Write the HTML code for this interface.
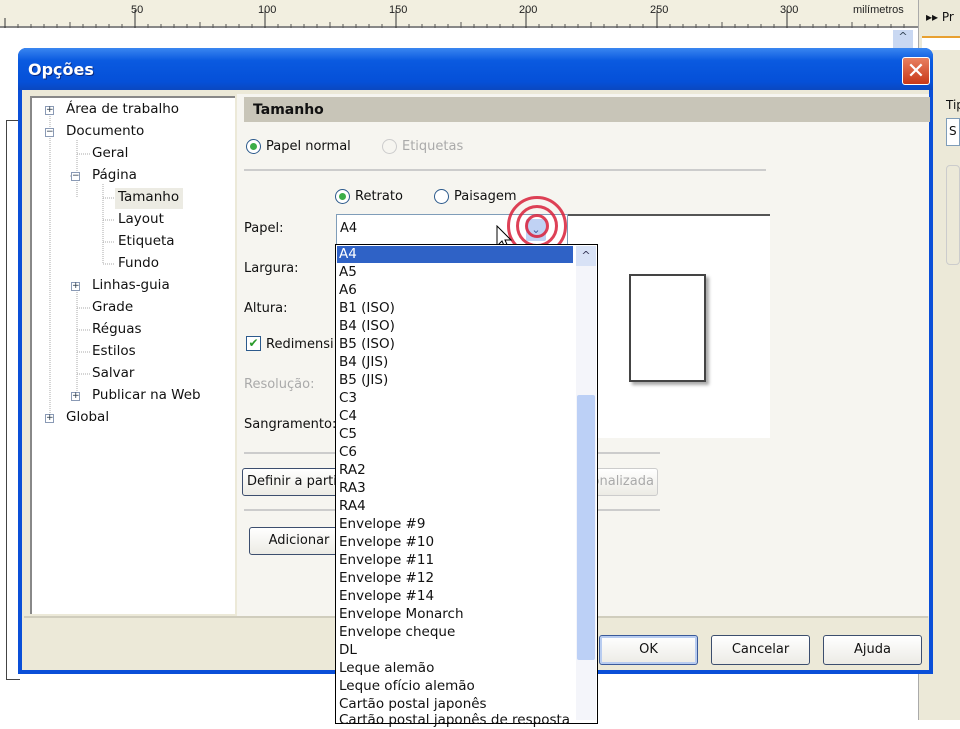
<!DOCTYPE html>
<html><head><meta charset="utf-8"><style>
*{margin:0;padding:0;box-sizing:border-box}
body{width:960px;height:720px;overflow:hidden;background:#fff;font-family:"DejaVu Sans","Liberation Sans",sans-serif;font-size:13px;color:#111;position:relative}
.a{position:absolute;white-space:nowrap}
.btn{position:absolute;border:1px solid #3c4e6e;border-radius:3px;background:linear-gradient(#fff,#ecebe5);text-align:center;font-size:13px}
.tr{position:absolute;font-size:13.5px}
.pm{position:absolute;width:9px;height:9px;border:1px solid #8a9ab5;background:#fff;font-size:9px;line-height:7px;text-align:center;color:#234}
.li{position:absolute;left:339px;font-size:13.5px;height:18px;line-height:18px}
</style></head><body>
<!-- ruler -->
<div class="a" style="left:0;top:0;width:918px;height:28px;background:#f2efe0;border-bottom:2px solid #888"></div>
<svg class="a" style="left:0;top:0" width="918" height="30">
<g stroke="#333" stroke-width="1">
<line x1="5" y1="18" x2="5" y2="28"/><line x1="135" y1="10" x2="135" y2="28"/><line x1="265" y1="10" x2="265" y2="28"/><line x1="396" y1="10" x2="396" y2="28"/><line x1="526" y1="10" x2="526" y2="28"/><line x1="657" y1="10" x2="657" y2="28"/><line x1="787" y1="10" x2="787" y2="28"/>
</g>
<g stroke="#555" stroke-width="1">
<path d="M18 24v4M31 24v4M44 24v4M57 24v4M70 22v6M83 24v4M96 24v4M109 24v4M122 24v4M148 24v4M161 24v4M174 24v4M187 24v4M200 22v6M213 24v4M226 24v4M239 24v4M252 24v4M278 24v4M291 24v4M304 24v4M317 24v4M330 22v6M343 24v4M356 24v4M369 24v4M382 24v4M409 24v4M422 24v4M435 24v4M448 24v4M461 22v6M474 24v4M487 24v4M500 24v4M513 24v4M539 24v4M552 24v4M565 24v4M578 24v4M591 22v6M604 24v4M617 24v4M630 24v4M643 24v4M670 24v4M683 24v4M696 24v4M709 24v4M722 22v6M735 24v4M748 24v4M761 24v4M774 24v4M800 24v4M813 24v4M826 24v4M839 24v4M852 22v6M865 24v4M878 24v4M891 24v4M904 24v4"/>
</g>
<g font-family="Liberation Sans" font-size="11" fill="#222"><text x="131" y="13">50</text><text x="258" y="13">100</text><text x="389" y="13">150</text><text x="519" y="13">200</text><text x="650" y="13">250</text><text x="780" y="13">300</text><text x="853" y="13">milímetros</text></g>
</svg>
<div class="a" style="left:918px;top:0;width:42px;height:720px;background:#ece9d8;border-left:1px solid #aaa"></div>
<div class="a" style="left:926px;top:10px;font-size:12px">▸▸ Pr</div>
<div class="a" style="left:922px;top:36px;width:38px;height:14px;background:#fff;border-top:2px solid #e8a030"></div>
<div class="a" style="left:946px;top:98px;font-size:12px">Tip</div>
<div class="a" style="left:946px;top:118px;width:14px;height:28px;border:1px solid #7f9db9;background:#fff;font-size:12px;padding:5px 2px">S</div>
<div class="a" style="left:946px;top:165px;width:14px;height:100px;border:1px solid #ccc;border-radius:4px"></div>
<div class="a" style="left:893px;top:30px;width:20px;height:18px;background:#c9d8f2;color:#345;font-size:11px;text-align:center">^</div>
<div class="a" style="left:6px;top:120px;width:14px;height:560px;border:1px solid #444;border-right:none;background:#fff"></div>
<!-- dialog -->
<div class="a" style="left:18px;top:48px;width:915px;height:626px;background:#0a4fd8;border-radius:8px 8px 0 0"></div>
<div class="a" style="left:18px;top:48px;width:915px;height:42px;background:linear-gradient(#3a86f0,#0a5ae0 30%,#0550d8 80%,#0a48c0);border-radius:8px 8px 0 0"></div>
<div class="a" style="left:28px;top:60px;color:#fff;font-size:16px;font-weight:bold;text-shadow:1px 1px #0a2a80">Opções</div>
<div class="a" style="left:902px;top:57px;width:28px;height:28px;background:linear-gradient(#e88060,#c83818);border:1px solid #fff;border-radius:3px;color:#fff;font-size:22px;line-height:26px;text-align:center;font-family:'Liberation Sans'">✕</div>
<div class="a" style="left:22px;top:90px;width:907px;height:580px;background:#ece9d8"></div>
<div class="a" style="left:237px;top:94px;width:692px;height:522px;background:#f6f5f0"></div>
<div class="a" style="left:24px;top:616px;width:904px;height:2px;background:#d0cdbd"></div>
<!-- tree -->
<div class="a" style="left:30px;top:96px;width:205px;height:518px;background:#fff;border-top:2px solid #888;border-left:2px solid #888"></div>
<svg class="a" style="left:30px;top:96px" width="205" height="340"><g stroke="#aaa" stroke-dasharray="1,1" fill="none">
<path d="M20 14V322M47 44V102M47 58H60M73 88V168M73 102H85M73 124H85M73 146H85M73 168H85M47 80H40M47 190V300M47 212H60M47 234H60M47 256H60M47 278H60"/></g></svg>
<div class="pm" style="left:45px;top:106px">+</div><div class="tr" style="left:66px;top:101px">Área de trabalho</div>
<div class="pm" style="left:45px;top:128px">−</div><div class="tr" style="left:66px;top:123px">Documento</div>
<div class="tr" style="left:92px;top:145px">Geral</div>
<div class="pm" style="left:71px;top:172px">−</div><div class="tr" style="left:92px;top:167px">Página</div>
<div class="a" style="left:115px;top:188px;width:68px;height:21px;background:#ecebe3"></div>
<div class="tr" style="left:118px;top:189px">Tamanho</div>
<div class="tr" style="left:118px;top:211px">Layout</div>
<div class="tr" style="left:118px;top:233px">Etiqueta</div>
<div class="tr" style="left:118px;top:255px">Fundo</div>
<div class="pm" style="left:71px;top:282px">+</div><div class="tr" style="left:92px;top:277px">Linhas-guia</div>
<div class="tr" style="left:92px;top:299px">Grade</div>
<div class="tr" style="left:92px;top:321px">Réguas</div>
<div class="tr" style="left:92px;top:343px">Estilos</div>
<div class="tr" style="left:92px;top:365px">Salvar</div>
<div class="pm" style="left:71px;top:392px">+</div><div class="tr" style="left:92px;top:387px">Publicar na Web</div>
<div class="pm" style="left:45px;top:414px">+</div><div class="tr" style="left:66px;top:409px">Global</div>
<!-- right content -->
<div class="a" style="left:244px;top:97px;width:686px;height:25px;background:#c8c5b8"></div>
<div class="a" style="left:253px;top:102px;font-weight:bold;font-size:14px">Tamanho</div>
<div class="a" style="left:246px;top:139px;width:15px;height:15px;border-radius:50%;border:1px solid #2c5a8c;background:#fff"><div style="margin:3px;width:7px;height:7px;border-radius:50%;background:#3cae48"></div></div>
<div class="a" style="left:266px;top:139px">Papel normal</div>
<div class="a" style="left:382px;top:139px;width:15px;height:15px;border-radius:50%;border:1px solid #ccc"></div>
<div class="a" style="left:402px;top:139px;color:#aaa">Etiquetas</div>
<div class="a" style="left:244px;top:169px;width:522px;height:2px;background:#ccc"></div>
<div class="a" style="left:335px;top:189px;width:15px;height:15px;border-radius:50%;border:1px solid #2c5a8c;background:#fff"><div style="margin:3px;width:7px;height:7px;border-radius:50%;background:#3cae48"></div></div>
<div class="a" style="left:355px;top:189px">Retrato</div>
<div class="a" style="left:434px;top:189px;width:15px;height:15px;border-radius:50%;border:1px solid #2c5a8c;background:#fff"></div>
<div class="a" style="left:454px;top:189px">Paisagem</div>
<div class="a" style="left:244px;top:221px">Papel:</div>
<div class="a" style="left:244px;top:261px">Largura:</div>
<div class="a" style="left:244px;top:301px">Altura:</div>
<div class="a" style="left:246px;top:336px;width:15px;height:15px;border:1px solid #2c5a8c;background:#fff;color:#2a9a2a;font-size:12px;line-height:13px;text-align:center">✔</div>
<div class="a" style="left:266px;top:337px">Redimensi</div>
<div class="a" style="left:244px;top:377px;color:#aaa">Resolução:</div>
<div class="a" style="left:244px;top:417px">Sangramento:</div>
<div class="a" style="left:565px;top:214px;width:205px;height:2px;background:#555"></div>
<div class="a" style="left:565px;top:216px;width:205px;height:222px;background:#fff"></div>
<div class="a" style="left:629px;top:274px;width:77px;height:108px;border:2px solid #444;background:#fff;box-shadow:3px 3px 3px #aaa"></div>
<div class="a" style="left:244px;top:452px;width:416px;height:2px;background:#ccc"></div>
<div class="btn" style="left:242px;top:468px;width:120px;height:28px;line-height:26px;text-align:left;padding-left:4px">Definir a parti</div>
<div class="btn" style="left:560px;top:468px;width:98px;height:28px;line-height:26px;color:#aaa;border-color:#ccc">Personalizada</div>
<div class="a" style="left:244px;top:509px;width:416px;height:2px;background:#ccc"></div>
<div class="btn" style="left:249px;top:527px;width:100px;height:28px;line-height:26px">Adicionar</div>
<!-- combo -->
<div class="a" style="left:336px;top:214px;width:232px;height:32px;background:#fff;border:1px solid #7f9db9"></div>
<div class="a" style="left:340px;top:221px">A4</div>
<div class="a" style="left:526px;top:219px;width:20px;height:22px;background:#c0d2f4;border-radius:2px;color:#3a5a9a;font-size:11px;text-align:center;line-height:22px">⌄</div>
<div class="a" style="left:507px;top:196px;width:60px;height:60px;border:3px solid #d8203a;border-radius:50%;opacity:.85"></div>
<div class="a" style="left:516px;top:205px;width:42px;height:42px;border:3px solid #d8203a;border-radius:50%;opacity:.85"></div>
<div class="a" style="left:525px;top:214px;width:24px;height:24px;border:3px solid #d8203a;border-radius:50%;opacity:.85"></div>
<svg class="a" style="left:496px;top:225px" width="16" height="28"><path d="M1 1L1 21L6 16L10 25L13 24L9 15L15 15Z" fill="#fff" stroke="#000"/></svg>
<!-- list -->
<div class="a" style="left:335px;top:244px;width:263px;height:480px;background:#fff;border:1px solid #000"></div>
<div class="a" style="left:337px;top:246px;width:236px;height:17px;background:#2f62c6"></div>
<div class="a" style="left:576px;top:246px;width:20px;height:474px;background:#f4f5fa"></div>
<div class="a" style="left:576px;top:246px;width:20px;height:20px;background:#d8e2f6;color:#335;font-size:11px;text-align:center;line-height:20px">^</div>
<div class="a" style="left:577px;top:395px;width:18px;height:265px;background:#bcd0f6;border-radius:2px"></div>
<div style="font-family:'DejaVu Sans',sans-serif">
<div class="li" style="top:245px;color:#fff">A4</div>
<div class="li" style="top:263px">A5</div>
<div class="li" style="top:281px">A6</div>
<div class="li" style="top:317px;top:299px">B1 (ISO)</div>
<div class="li" style="top:317px">B4 (ISO)</div>
<div class="li" style="top:335px">B5 (ISO)</div>
<div class="li" style="top:353px">B4 (JIS)</div>
<div class="li" style="top:371px">B5 (JIS)</div>
<div class="li" style="top:389px">C3</div>
<div class="li" style="top:407px">C4</div>
<div class="li" style="top:425px">C5</div>
<div class="li" style="top:443px">C6</div>
<div class="li" style="top:461px">RA2</div>
<div class="li" style="top:479px">RA3</div>
<div class="li" style="top:497px">RA4</div>
<div class="li" style="top:515px">Envelope #9</div>
<div class="li" style="top:533px">Envelope #10</div>
<div class="li" style="top:551px">Envelope #11</div>
<div class="li" style="top:569px">Envelope #12</div>
<div class="li" style="top:587px">Envelope #14</div>
<div class="li" style="top:605px">Envelope Monarch</div>
<div class="li" style="top:623px">Envelope cheque</div>
<div class="li" style="top:641px">DL</div>
<div class="li" style="top:659px">Leque alemão</div>
<div class="li" style="top:677px">Leque ofício alemão</div>
<div class="li" style="top:695px">Cartão postal japonês</div>
<div class="li" style="top:711px">Cartão postal japonês de resposta</div>
</div>
<!-- buttons -->
<div class="btn" style="left:599px;top:635px;width:99px;height:30px;line-height:28px;border-color:#3a5a9a;box-shadow:inset 0 0 0 2px #b8ccf0">OK</div>
<div class="btn" style="left:711px;top:635px;width:99px;height:30px;line-height:28px">Cancelar</div>
<div class="btn" style="left:823px;top:635px;width:99px;height:30px;line-height:28px">Ajuda</div>
</body></html>
